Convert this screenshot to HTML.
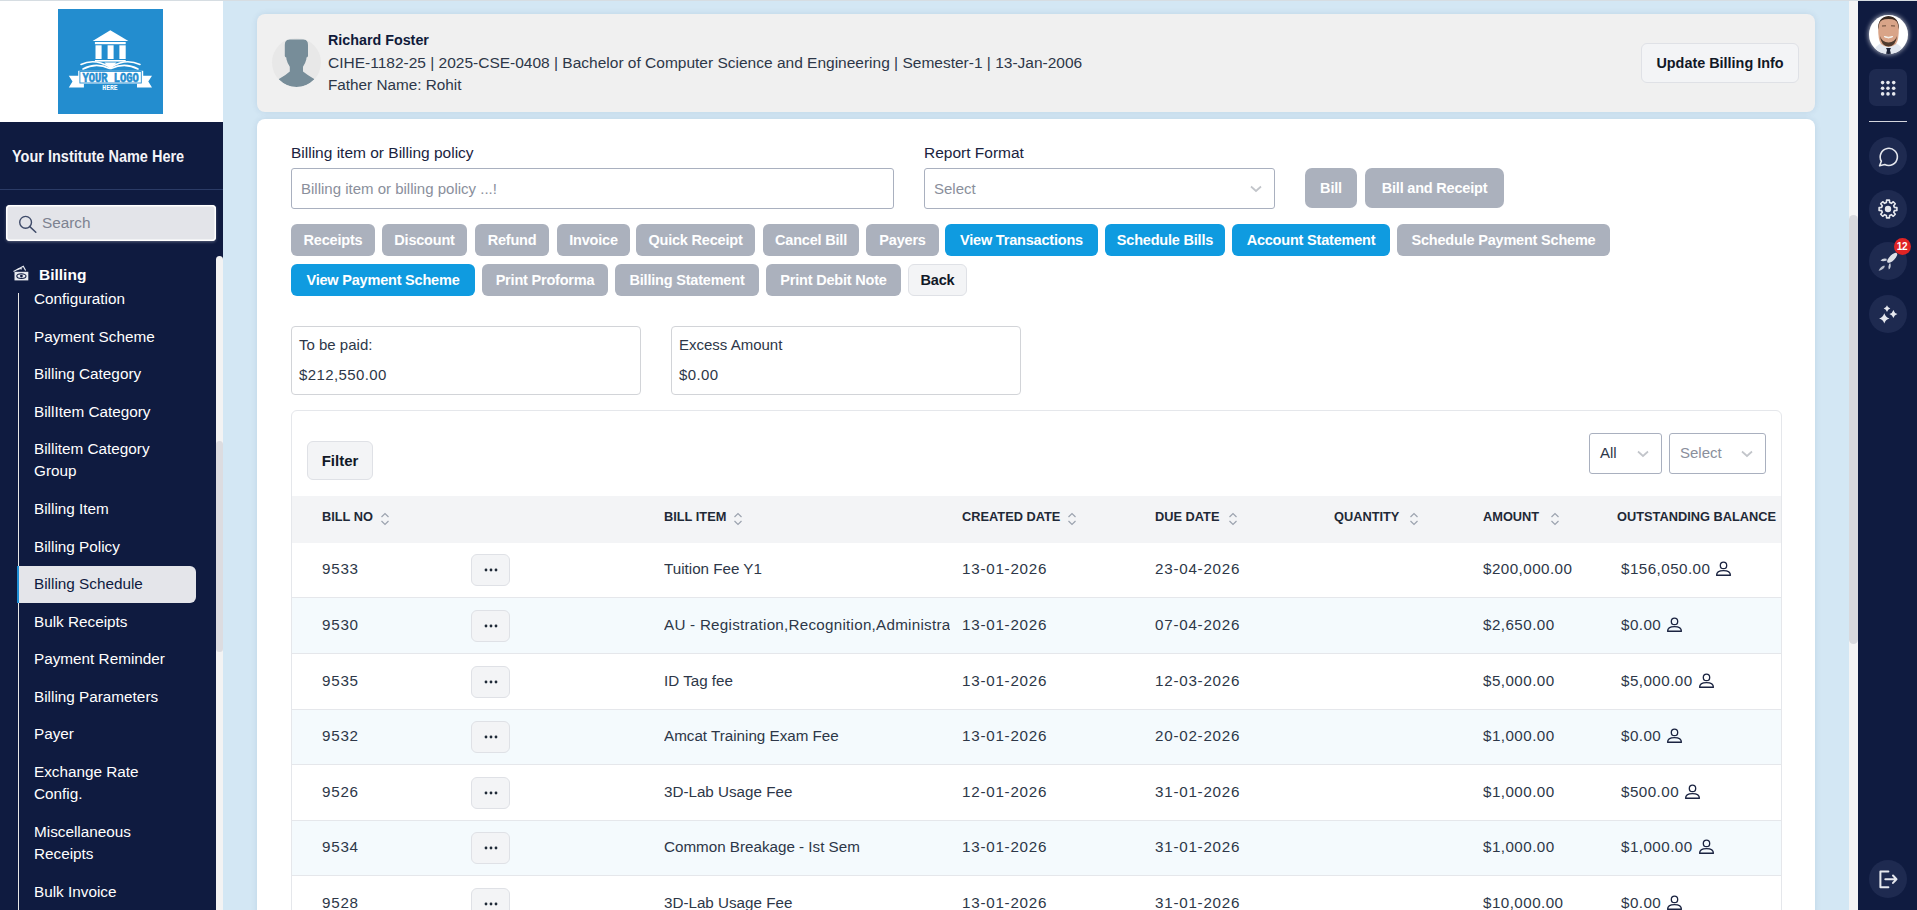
<!DOCTYPE html>
<html><head><meta charset="utf-8">
<style>
*{box-sizing:border-box;margin:0;padding:0}
html,body{width:1917px;height:910px;overflow:hidden;font-family:"Liberation Sans",sans-serif;background:#d3e7f4;color:#1f2937}
.abs{position:absolute}
#side{position:absolute;left:0;top:0;width:223px;height:910px;background:#0f1b40}
#side .top{position:absolute;left:0;top:0;width:223px;height:122px;background:#fff}
#logo{position:absolute;left:58px;top:9px;width:105px;height:105px;background:#238dcf}
#inst{position:absolute;left:12px;top:147.5px;color:#f4f4f8;font-weight:bold;font-size:15.6px;white-space:nowrap;transform-origin:0 0;transform:scaleX(0.93)}
#sdiv{position:absolute;left:0;top:189px;width:223px;height:1px;background:#2b3b66}
#search{position:absolute;left:6px;top:205px;width:210px;height:36px;background:#e3e4e9;border-radius:4px;box-shadow:0 0 0 1.5px #fff inset, 0 1px 3px rgba(255,255,255,.3)}
#search span{position:absolute;left:36px;top:9px;font-size:15.3px;color:#7d8290}
.menu{position:absolute;left:34px;color:#fff;font-size:15.3px;white-space:nowrap;line-height:22.2px}
#vline{position:absolute;left:18px;top:293px;width:1px;height:617px;background:#e6e6e6}
#active{position:absolute;left:17px;top:566px;width:179px;height:37px;background:#e4e5ea;border-radius:0 6px 6px 0;border-left:2px solid #1f8fd6}
#strack{position:absolute;left:216px;top:256px;width:7px;height:654px;background:#f3f3f3;border-radius:3.5px 3.5px 0 0}
#sthumb{position:absolute;left:216px;top:441px;width:7px;height:211px;background:#dcdce0;border-radius:3.5px}

#rail{position:absolute;left:1858px;top:0;width:59px;height:910px;background:#0f1b40}
#mtrack{position:absolute;left:1849px;top:0;width:9px;height:910px;background:#f4f4f4}
#mthumb{position:absolute;left:1849px;top:215px;width:9px;height:429px;background:#d8d9dd;border-radius:4.5px}

#hdr{position:absolute;left:257px;top:14px;width:1558px;height:98px;background:#f0f0f0;border-radius:8px;box-shadow:0 0 6px rgba(0,60,110,.10)}
#card{position:absolute;left:257px;top:119px;width:1558px;height:820px;background:#fff;border-radius:8px;box-shadow:0 0 6px rgba(0,60,110,.10)}
.t{position:absolute;white-space:nowrap}
.btn{position:absolute;height:32px;border-radius:6px;color:#fff;font-weight:bold;font-size:14.5px;line-height:32px;text-align:center;white-space:nowrap;letter-spacing:-0.2px}
.g{background:#abb1bd}
.b{background:#0f9be0}
.td{top:16.5px;font-size:15.2px;color:#2d3748;line-height:20px}
.num{letter-spacing:.45px}
.dt{letter-spacing:.75px}
.dots{position:absolute;left:179px;top:11.5px;width:39px;height:32px;border:1px solid #dfe1e6;background:#f3f4f6;border-radius:6px;display:flex;align-items:center;justify-content:center}
.ric{position:absolute;left:11px;width:38px;height:38px;border-radius:50%;background:#1e2a50}
.lbl{font-size:15.5px;color:#1a2340}
</style></head>
<body>
<div id="topline" style="position:absolute;left:0;top:0;width:1917px;height:1px;background:#d6dde2;z-index:5"></div>
<div id="side">
  <div class="top"></div>
  <div id="logo"><svg width="105" height="105" viewBox="0 0 105 105" style="position:absolute;left:0;top:0">
<g fill="#fff">
<path d="M34.6 31.9 L52.3 21.2 L70.4 31.9 Z"/>
<rect x="36.9" y="33" width="30.8" height="2.2"/>
<rect x="37.5" y="36.3" width="6.1" height="13.7"/>
<rect x="49.6" y="36.3" width="6" height="13.7"/>
<rect x="61.4" y="36.3" width="6.3" height="13.7"/>
<rect x="36.9" y="51" width="30.8" height="1.6"/>
<path d="M46.5 53.6 L58.5 53.6 L52.3 60.5 Z"/>
<rect x="20.2" y="61.8" width="65" height="13"/>
<path d="M10.8 66.8 L25.9 66.8 L25.9 78.5 L10.8 78.5 L14.5 72.6 Z"/>
<path d="M94 66.8 L79 66.8 L79 78.5 L94 78.5 L90.3 72.6 Z"/>
</g>
<g fill="none" stroke="#fff" stroke-width="1.6" stroke-linecap="round">
<path d="M23 55.5 Q36 49 51 57.5"/>
<path d="M82 55.5 Q68 49 54 57.5"/>
<path d="M25 60 Q38 53 51.5 59.5"/>
<path d="M80 60 Q67 53 53 59.5"/>
</g>
<rect x="21.9" y="62.4" width="61.4" height="11.6" fill="#fff" stroke="#248dd0" stroke-width="0.9"/>
<text x="52.6" y="72.6" text-anchor="middle" font-family="Liberation Mono" font-weight="bold" font-size="10.4" fill="#248dd0" stroke="#248dd0" stroke-width="0.5" transform="translate(52.6 72.6) scale(1 1.15) translate(-52.6 -72.6)">YOUR LOGO</text>
<text x="52" y="80.9" text-anchor="middle" font-family="Liberation Mono" font-weight="bold" font-size="6.4" fill="#fff" transform="translate(52 80.9) scale(1 1.0) translate(-52 -80.9)">HERE</text>
</svg></div>
  <div id="inst">Your Institute Name Here</div>
  <div id="sdiv"></div>
  <div id="search"><svg class="abs" style="left:12px;top:10px" width="20" height="20" viewBox="0 0 20 20"><circle cx="7.6" cy="7.3" r="5.9" fill="none" stroke="#3f4b69" stroke-width="1.4"/><path d="M11.8 11.6 L17.8 17.2" stroke="#3f4b69" stroke-width="1.5" stroke-linecap="round"/></svg><span>Search</span></div>
  <svg class="abs" style="left:12px;top:265px" width="18" height="18" viewBox="0 0 18 18"><g fill="none" stroke="#e8eaf0" stroke-width="1.2"><path d="M1.5 6.5 L11.3 1.3 L13.6 5.5"/><rect x="2.5" y="6.8" width="13.8" height="8.6" fill="#e8eaf0" stroke="none"/></g><ellipse cx="9.4" cy="11.1" rx="4.6" ry="2.4" fill="none" stroke="#0f1b40" stroke-width="1.1"/><circle cx="9.4" cy="11.1" r="1.4" fill="#0f1b40"/><path d="M5 4.8 Q8 3 10 4" stroke="#e8eaf0" stroke-width="1.1" fill="none"/></svg>
  <div class="t" style="left:39px;top:266px;color:#fff;font-weight:bold;font-size:15.5px">Billing</div>
  <div id="vline"></div>
  <div id="active"></div>
  <div class="menu" style="top:288px">Configuration</div>
  <div class="menu" style="top:326px">Payment Scheme</div>
  <div class="menu" style="top:363px">Billing Category</div>
  <div class="menu" style="top:401px">BillItem Category</div>
  <div class="menu" style="top:438px">Billitem Category<br>Group</div>
  <div class="menu" style="top:498px">Billing Item</div>
  <div class="menu" style="top:536px">Billing Policy</div>
  <div class="menu" style="top:573px;color:#0f1b40">Billing Schedule</div>
  <div class="menu" style="top:611px">Bulk Receipts</div>
  <div class="menu" style="top:648px">Payment Reminder</div>
  <div class="menu" style="top:686px">Billing Parameters</div>
  <div class="menu" style="top:723px">Payer</div>
  <div class="menu" style="top:761px">Exchange Rate<br>Config.</div>
  <div class="menu" style="top:821px">Miscellaneous<br>Receipts</div>
  <div class="menu" style="top:881px">Bulk Invoice</div>
  <div id="strack"></div>
  <div id="sthumb"></div>
</div>

<div id="hdr">
  <div class="abs" style="left:15px;top:24px;width:49px;height:49px;border-radius:50%;background:#e8e8e8;overflow:hidden">
    <svg width="49" height="49" viewBox="0 0 49 49"><path d="M17.5 1.5 Q12.8 1.5 12.8 7 L12.8 18 Q13 19 14.3 19.5 L14.5 21.5 Q15.5 25.5 17.8 28.7 L17.8 33.5 Q13.5 37.5 6.5 41.3 Q14 49 24.5 49 Q35 49 42.6 41.3 Q36 37.5 31 33.5 L31 28.7 Q33.3 25.5 34.3 21.5 L34.5 19.5 Q35.8 19 36 18 L36 7 Q36 1.5 31.5 1.5 Z" fill="#778d99"/></svg>
  </div>
  <div class="t" style="left:71px;top:18px;font-weight:bold;font-size:14.3px;color:#0f1a3a">Richard Foster</div>
  <div class="t" style="left:71px;top:40px;font-size:15.5px;color:#2d3748">CIHE-1182-25 | 2025-CSE-0408 | Bachelor of Computer Science and Engineering | Semester-1 | 13-Jan-2006</div>
  <div class="t" style="left:71px;top:62px;font-size:15.3px;color:#2d3748">Father Name: Rohit</div>
  <div class="abs" style="left:1384px;top:29px;width:158px;height:40px;border:1px solid #dfe1e6;background:#f3f4f6;border-radius:6px;font-weight:bold;font-size:14.4px;color:#111827;text-align:center;line-height:38px">Update Billing Info</div>
</div>
<div id="card">
</div>
<div id="content">
<div class="t lbl" style="left:291px;top:144px">Billing item or Billing policy</div>
<div class="abs" style="left:291px;top:168px;width:603px;height:41px;border:1px solid #a9b0bf;border-radius:3px"><span class="t" style="left:9px;top:11px;font-size:15px;color:#8a8f9c">Billing item or billing policy ...!</span></div>
<div class="t lbl" style="left:924px;top:144px">Report Format</div>
<div class="abs" style="left:924px;top:168px;width:351px;height:41px;border:1px solid #a9b0bf;border-radius:3px"><span class="t" style="left:9px;top:11px;font-size:15px;color:#8a8f9c">Select</span><svg class="abs" style="right:12px;top:16px" width="12" height="8" viewBox="0 0 12 8"><path d="M1 1.5 L6 6 L11 1.5" fill="none" stroke="#c2c5ca" stroke-width="1.7"/></svg></div>
<div class="btn g" style="left:1305px;top:168px;width:52px;height:40px;line-height:40px;border-radius:7px">Bill</div>
<div class="btn g" style="left:1365px;top:168px;width:139px;height:40px;line-height:40px;border-radius:7px">Bill and Receipt</div>
<div class="btn g" style="left:291px;top:224px;width:84px">Receipts</div>
<div class="btn g" style="left:382px;top:224px;width:85px">Discount</div>
<div class="btn g" style="left:475px;top:224px;width:74px">Refund</div>
<div class="btn g" style="left:557px;top:224px;width:73px">Invoice</div>
<div class="btn g" style="left:636px;top:224px;width:119px">Quick Receipt</div>
<div class="btn g" style="left:763px;top:224px;width:96px">Cancel Bill</div>
<div class="btn g" style="left:866px;top:224px;width:73px">Payers</div>
<div class="btn b" style="left:945px;top:224px;width:153px">View Transactions</div>
<div class="btn b" style="left:1105px;top:224px;width:120px">Schedule Bills</div>
<div class="btn b" style="left:1232px;top:224px;width:158px">Account Statement</div>
<div class="btn g" style="left:1397px;top:224px;width:213px">Schedule Payment Scheme</div>
<div class="btn b" style="left:291px;top:264px;width:184px">View Payment Scheme</div>
<div class="btn g" style="left:482px;top:264px;width:126px">Print Proforma</div>
<div class="btn g" style="left:615px;top:264px;width:144px">Billing Statement</div>
<div class="btn g" style="left:766px;top:264px;width:135px">Print Debit Note</div>
<div class="btn" style="left:908px;top:264px;width:59px;background:#f3f4f6;border:1px solid #dfe1e6;color:#111827;line-height:30px">Back</div>
<div class="abs" style="left:291px;top:326px;width:350px;height:69px;border:1px solid #d2d4d8;border-radius:4px"><span class="t" style="left:7px;top:9px;font-size:15px;color:#2d3748">To be paid:</span><span class="t" style="left:7px;top:39px;font-size:15px;color:#2d3748;letter-spacing:.4px">$212,550.00</span></div>
<div class="abs" style="left:671px;top:326px;width:350px;height:69px;border:1px solid #d2d4d8;border-radius:4px"><span class="t" style="left:7px;top:9px;font-size:15px;color:#2d3748">Excess Amount</span><span class="t" style="left:7px;top:39px;font-size:15px;color:#2d3748;letter-spacing:.4px">$0.00</span></div>
<div class="abs" style="left:291px;top:410px;width:1491px;height:520px;border:1px solid #e5e7eb;border-radius:6px"></div>
<div class="abs" style="left:307px;top:441px;width:66px;height:39px;border:1px solid #dfe1e6;background:#f3f4f6;border-radius:6px;font-weight:bold;font-size:15px;color:#111827;text-align:center;line-height:37px">Filter</div>
<div class="abs" style="left:1589px;top:433px;width:73px;height:41px;border:1px solid #a9b0bf;border-radius:3px"><span class="t" style="left:10px;top:10px;font-size:15px;color:#2d3748">All</span><svg class="abs" style="right:12px;top:16px" width="12" height="8" viewBox="0 0 12 8"><path d="M1 1.5 L6 6 L11 1.5" fill="none" stroke="#c2c5ca" stroke-width="1.7"/></svg></div>
<div class="abs" style="left:1669px;top:433px;width:97px;height:41px;border:1px solid #a9b0bf;border-radius:3px"><span class="t" style="left:10px;top:10px;font-size:15px;color:#8a8f9c">Select</span><svg class="abs" style="right:12px;top:16px" width="12" height="8" viewBox="0 0 12 8"><path d="M1 1.5 L6 6 L11 1.5" fill="none" stroke="#c2c5ca" stroke-width="1.7"/></svg></div>
<div class="abs" style="left:292px;top:496px;width:1489px;height:47px;background:#f3f4f6">
<span class="t" style="left:30px;top:13px;font-size:12.8px;font-weight:bold;color:#1f2937">BILL NO</span>
<svg class="abs" style="left:88px;top:15px" width="10" height="16" viewBox="0 0 10 16"><path d="M1.5 6 L5 2.5 L8.5 6 M1.5 10 L5 13.5 L8.5 10" fill="none" stroke="#9ca3af" stroke-width="1.2"/></svg>
<span class="t" style="left:372px;top:13px;font-size:12.8px;font-weight:bold;color:#1f2937">BILL ITEM</span>
<svg class="abs" style="left:441px;top:15px" width="10" height="16" viewBox="0 0 10 16"><path d="M1.5 6 L5 2.5 L8.5 6 M1.5 10 L5 13.5 L8.5 10" fill="none" stroke="#9ca3af" stroke-width="1.2"/></svg>
<span class="t" style="left:670px;top:13px;font-size:12.8px;font-weight:bold;color:#1f2937">CREATED DATE</span>
<svg class="abs" style="left:775px;top:15px" width="10" height="16" viewBox="0 0 10 16"><path d="M1.5 6 L5 2.5 L8.5 6 M1.5 10 L5 13.5 L8.5 10" fill="none" stroke="#9ca3af" stroke-width="1.2"/></svg>
<span class="t" style="left:863px;top:13px;font-size:12.8px;font-weight:bold;color:#1f2937">DUE DATE</span>
<svg class="abs" style="left:936px;top:15px" width="10" height="16" viewBox="0 0 10 16"><path d="M1.5 6 L5 2.5 L8.5 6 M1.5 10 L5 13.5 L8.5 10" fill="none" stroke="#9ca3af" stroke-width="1.2"/></svg>
<span class="t" style="left:1042px;top:13px;font-size:12.8px;font-weight:bold;color:#1f2937">QUANTITY</span>
<svg class="abs" style="left:1117px;top:15px" width="10" height="16" viewBox="0 0 10 16"><path d="M1.5 6 L5 2.5 L8.5 6 M1.5 10 L5 13.5 L8.5 10" fill="none" stroke="#9ca3af" stroke-width="1.2"/></svg>
<span class="t" style="left:1191px;top:13px;font-size:12.8px;font-weight:bold;color:#1f2937">AMOUNT</span>
<svg class="abs" style="left:1258px;top:15px" width="10" height="16" viewBox="0 0 10 16"><path d="M1.5 6 L5 2.5 L8.5 6 M1.5 10 L5 13.5 L8.5 10" fill="none" stroke="#9ca3af" stroke-width="1.2"/></svg>
<span class="t" style="left:1325px;top:13px;font-size:12.8px;font-weight:bold;color:#1f2937">OUTSTANDING BALANCE</span>
</div>
<div class="abs row" style="left:292px;top:542.8px;width:1489px;height:55.6px;background:#fff;border-bottom:1px solid #e5e7eb">
<span class="t td dt" style="left:30px">9533</span>
<div class="dots"><svg width="14" height="4" viewBox="0 0 14 4"><circle cx="2" cy="2" r="1.4" fill="#1f2937"/><circle cx="7" cy="2" r="1.4" fill="#1f2937"/><circle cx="12" cy="2" r="1.4" fill="#1f2937"/></svg></div>
<span class="t td" style="left:372px;width:286px;overflow:hidden;text-overflow:clip">Tuition Fee Y1</span>
<span class="t td dt" style="left:670px">13-01-2026</span>
<span class="t td dt" style="left:863px">23-04-2026</span>
<span class="t td num" style="left:1191px">$200,000.00</span>
<span class="t td num" style="left:1329px">$156,050.00<svg width="17" height="16" viewBox="0 0 17 16" style="vertical-align:-3px;margin-left:5px"><circle cx="8.5" cy="4.4" r="3.2" fill="none" stroke="#1a2340" stroke-width="1.3"/><path d="M1.6 14.2 Q1.6 9.6 8.5 9.6 Q15.4 9.6 15.4 14.2 Z" fill="none" stroke="#1a2340" stroke-width="1.35" stroke-linejoin="round"/></svg></span>
</div>
<div class="abs row" style="left:292px;top:598.4px;width:1489px;height:55.6px;background:#f4fafd;border-bottom:1px solid #e5e7eb">
<span class="t td dt" style="left:30px">9530</span>
<div class="dots"><svg width="14" height="4" viewBox="0 0 14 4"><circle cx="2" cy="2" r="1.4" fill="#1f2937"/><circle cx="7" cy="2" r="1.4" fill="#1f2937"/><circle cx="12" cy="2" r="1.4" fill="#1f2937"/></svg></div>
<span class="t td" style="left:372px;width:286px;overflow:hidden;text-overflow:clip;letter-spacing:.26px">AU - Registration,Recognition,Administration</span>
<span class="t td dt" style="left:670px">13-01-2026</span>
<span class="t td dt" style="left:863px">07-04-2026</span>
<span class="t td num" style="left:1191px">$2,650.00</span>
<span class="t td num" style="left:1329px">$0.00<svg width="17" height="16" viewBox="0 0 17 16" style="vertical-align:-3px;margin-left:5px"><circle cx="8.5" cy="4.4" r="3.2" fill="none" stroke="#1a2340" stroke-width="1.3"/><path d="M1.6 14.2 Q1.6 9.6 8.5 9.6 Q15.4 9.6 15.4 14.2 Z" fill="none" stroke="#1a2340" stroke-width="1.35" stroke-linejoin="round"/></svg></span>
</div>
<div class="abs row" style="left:292px;top:654.0px;width:1489px;height:55.6px;background:#fff;border-bottom:1px solid #e5e7eb">
<span class="t td dt" style="left:30px">9535</span>
<div class="dots"><svg width="14" height="4" viewBox="0 0 14 4"><circle cx="2" cy="2" r="1.4" fill="#1f2937"/><circle cx="7" cy="2" r="1.4" fill="#1f2937"/><circle cx="12" cy="2" r="1.4" fill="#1f2937"/></svg></div>
<span class="t td" style="left:372px;width:286px;overflow:hidden;text-overflow:clip">ID Tag fee</span>
<span class="t td dt" style="left:670px">13-01-2026</span>
<span class="t td dt" style="left:863px">12-03-2026</span>
<span class="t td num" style="left:1191px">$5,000.00</span>
<span class="t td num" style="left:1329px">$5,000.00<svg width="17" height="16" viewBox="0 0 17 16" style="vertical-align:-3px;margin-left:5px"><circle cx="8.5" cy="4.4" r="3.2" fill="none" stroke="#1a2340" stroke-width="1.3"/><path d="M1.6 14.2 Q1.6 9.6 8.5 9.6 Q15.4 9.6 15.4 14.2 Z" fill="none" stroke="#1a2340" stroke-width="1.35" stroke-linejoin="round"/></svg></span>
</div>
<div class="abs row" style="left:292px;top:709.6px;width:1489px;height:55.6px;background:#f4fafd;border-bottom:1px solid #e5e7eb">
<span class="t td dt" style="left:30px">9532</span>
<div class="dots"><svg width="14" height="4" viewBox="0 0 14 4"><circle cx="2" cy="2" r="1.4" fill="#1f2937"/><circle cx="7" cy="2" r="1.4" fill="#1f2937"/><circle cx="12" cy="2" r="1.4" fill="#1f2937"/></svg></div>
<span class="t td" style="left:372px;width:286px;overflow:hidden;text-overflow:clip">Amcat Training Exam Fee</span>
<span class="t td dt" style="left:670px">13-01-2026</span>
<span class="t td dt" style="left:863px">20-02-2026</span>
<span class="t td num" style="left:1191px">$1,000.00</span>
<span class="t td num" style="left:1329px">$0.00<svg width="17" height="16" viewBox="0 0 17 16" style="vertical-align:-3px;margin-left:5px"><circle cx="8.5" cy="4.4" r="3.2" fill="none" stroke="#1a2340" stroke-width="1.3"/><path d="M1.6 14.2 Q1.6 9.6 8.5 9.6 Q15.4 9.6 15.4 14.2 Z" fill="none" stroke="#1a2340" stroke-width="1.35" stroke-linejoin="round"/></svg></span>
</div>
<div class="abs row" style="left:292px;top:765.2px;width:1489px;height:55.6px;background:#fff;border-bottom:1px solid #e5e7eb">
<span class="t td dt" style="left:30px">9526</span>
<div class="dots"><svg width="14" height="4" viewBox="0 0 14 4"><circle cx="2" cy="2" r="1.4" fill="#1f2937"/><circle cx="7" cy="2" r="1.4" fill="#1f2937"/><circle cx="12" cy="2" r="1.4" fill="#1f2937"/></svg></div>
<span class="t td" style="left:372px;width:286px;overflow:hidden;text-overflow:clip">3D-Lab Usage Fee</span>
<span class="t td dt" style="left:670px">12-01-2026</span>
<span class="t td dt" style="left:863px">31-01-2026</span>
<span class="t td num" style="left:1191px">$1,000.00</span>
<span class="t td num" style="left:1329px">$500.00<svg width="17" height="16" viewBox="0 0 17 16" style="vertical-align:-3px;margin-left:5px"><circle cx="8.5" cy="4.4" r="3.2" fill="none" stroke="#1a2340" stroke-width="1.3"/><path d="M1.6 14.2 Q1.6 9.6 8.5 9.6 Q15.4 9.6 15.4 14.2 Z" fill="none" stroke="#1a2340" stroke-width="1.35" stroke-linejoin="round"/></svg></span>
</div>
<div class="abs row" style="left:292px;top:820.8px;width:1489px;height:55.6px;background:#f4fafd;border-bottom:1px solid #e5e7eb">
<span class="t td dt" style="left:30px">9534</span>
<div class="dots"><svg width="14" height="4" viewBox="0 0 14 4"><circle cx="2" cy="2" r="1.4" fill="#1f2937"/><circle cx="7" cy="2" r="1.4" fill="#1f2937"/><circle cx="12" cy="2" r="1.4" fill="#1f2937"/></svg></div>
<span class="t td" style="left:372px;width:286px;overflow:hidden;text-overflow:clip">Common Breakage - Ist Sem</span>
<span class="t td dt" style="left:670px">13-01-2026</span>
<span class="t td dt" style="left:863px">31-01-2026</span>
<span class="t td num" style="left:1191px">$1,000.00</span>
<span class="t td num" style="left:1329px">$1,000.00<svg width="17" height="16" viewBox="0 0 17 16" style="vertical-align:-3px;margin-left:5px"><circle cx="8.5" cy="4.4" r="3.2" fill="none" stroke="#1a2340" stroke-width="1.3"/><path d="M1.6 14.2 Q1.6 9.6 8.5 9.6 Q15.4 9.6 15.4 14.2 Z" fill="none" stroke="#1a2340" stroke-width="1.35" stroke-linejoin="round"/></svg></span>
</div>
<div class="abs row" style="left:292px;top:876.4px;width:1489px;height:55.6px;background:#fff;border-bottom:1px solid #e5e7eb">
<span class="t td dt" style="left:30px">9528</span>
<div class="dots"><svg width="14" height="4" viewBox="0 0 14 4"><circle cx="2" cy="2" r="1.4" fill="#1f2937"/><circle cx="7" cy="2" r="1.4" fill="#1f2937"/><circle cx="12" cy="2" r="1.4" fill="#1f2937"/></svg></div>
<span class="t td" style="left:372px;width:286px;overflow:hidden;text-overflow:clip">3D-Lab Usage Fee</span>
<span class="t td dt" style="left:670px">13-01-2026</span>
<span class="t td dt" style="left:863px">31-01-2026</span>
<span class="t td num" style="left:1191px">$10,000.00</span>
<span class="t td num" style="left:1329px">$0.00<svg width="17" height="16" viewBox="0 0 17 16" style="vertical-align:-3px;margin-left:5px"><circle cx="8.5" cy="4.4" r="3.2" fill="none" stroke="#1a2340" stroke-width="1.3"/><path d="M1.6 14.2 Q1.6 9.6 8.5 9.6 Q15.4 9.6 15.4 14.2 Z" fill="none" stroke="#1a2340" stroke-width="1.35" stroke-linejoin="round"/></svg></span>
</div>
</div>

<div id="mtrack"></div>
<div id="mthumb"></div>
<div id="rail">
  <div class="abs" style="left:11px;top:15.3px;width:38.5px;height:38.5px;border-radius:50%;background:#fff;box-shadow:0 0 4px 1px rgba(255,255,255,.55);overflow:hidden">
    <svg width="39" height="39" viewBox="0 0 39 39">
      <path d="M4 39 Q6 30 13 28 L19.5 31 L26 28 Q33 30 35 39 Z" fill="#e3e8f0"/>
      <path d="M17 33 L22 33 L21 35 L22 39 L17 39 L18 35 Z" fill="#1b2236"/>
      <path d="M9.2 12 Q9 25 12 29 Q15.5 32 19.5 32 Q23.5 32 27 29 Q30 25 29.8 12 Q29 1.5 19.5 1.5 Q10 1.5 9.2 12 Z" fill="#d9a488"/>
      <path d="M9 15 Q8.5 2 19.5 1 Q30.5 2 30 15 L28.8 9 Q28 4 19.5 4 Q11 4 10.2 9 Z" fill="#3b2a20"/>
      <path d="M11 21 Q12 31 19.5 31.5 Q27 31 28 21 Q26 27 19.5 27.5 Q13 27 11 21 Z" fill="#4e3a2e"/>
      <path d="M15 21.5 Q19.5 24.5 24 21.5 Q19.5 23 15 21.5 Z" fill="#f4f0ec" stroke="#f4f0ec" stroke-width="1"/>
      <path d="M13 11 L17 10.8 M22 10.8 L26 11" stroke="#5a4030" stroke-width="0.9"/>
    </svg>
  </div>
  <div class="abs" style="left:11px;top:69px;width:38px;height:37px;border-radius:7px;background:#1e2a50">
    <svg width="38" height="37" viewBox="0 0 38 37"><g fill="#e6e8ee">
      <circle cx="13.6" cy="13.6" r="1.8"/><circle cx="19" cy="13.6" r="1.8"/><circle cx="24.7" cy="13.6" r="1.8"/>
      <circle cx="13.6" cy="19.3" r="1.8"/><circle cx="19" cy="19.3" r="1.8"/><circle cx="24.7" cy="19.3" r="1.8"/>
      <circle cx="13.6" cy="24.9" r="1.8"/><circle cx="19" cy="24.9" r="1.8"/><circle cx="24.7" cy="24.9" r="1.8"/>
    </g></svg>
  </div>
  <div class="abs" style="left:11px;top:120.5px;width:38px;height:1.6px;background:#d4d6de"></div>
  <div class="ric" style="top:137px"><svg width="38" height="38" viewBox="0 0 38 38"><path d="M12.35 24.20 A8.6 8.6 0 1 1 15.76 27.49 L10.6 28.8 Z" fill="none" stroke="#e6e8ee" stroke-width="1.6" stroke-linejoin="round"/></svg></div>
  <div class="ric" style="top:189.5px"><svg width="38" height="38" viewBox="0 0 38 38"><path d="M27.89 17.59 L27.89 20.41 L25.39 20.64 L24.68 22.36 L26.28 24.29 L24.29 26.28 L22.36 24.68 L20.64 25.39 L20.41 27.89 L17.59 27.89 L17.36 25.39 L15.64 24.68 L13.71 26.28 L11.72 24.29 L13.32 22.36 L12.61 20.64 L10.11 20.41 L10.11 17.59 L12.61 17.36 L13.32 15.64 L11.72 13.71 L13.71 11.72 L15.64 13.32 L17.36 12.61 L17.59 10.11 L20.41 10.11 L20.64 12.61 L22.36 13.32 L24.29 11.72 L26.28 13.71 L24.68 15.64 L25.39 17.36 Z" fill="none" stroke="#e6e8ee" stroke-width="1.6" stroke-linejoin="round"/><circle cx="19" cy="19" r="3.2" fill="#e6e8ee"/></svg></div>
  <div class="ric" style="top:242px"><svg width="38" height="38" viewBox="0 0 38 38">
    <ellipse cx="23.2" cy="15.8" rx="6.6" ry="2.7" transform="rotate(-45 23.2 15.8)" fill="#dde0e8"/>
    <path d="M11.5 18.8 Q13.5 15.8 17.5 16.8 L17.8 18.4 Q14.5 19.8 11.5 18.8 Z" fill="#c9ced9"/>
    <path d="M20.2 21.8 L21.4 21.2 Q22.5 25.5 19.8 27.6 Q19 24.5 20.2 21.8 Z" fill="#c9ced9"/>
    <path d="M15.5 23.5 Q12 23.8 9.6 28.8 Q14.2 27.8 15.7 24.8 Z" fill="#b9bfcc"/>
  </svg></div>
  <div class="abs" style="left:35.5px;top:238px;width:17px;height:17px;border-radius:50%;background:#e02424;color:#fff;font-weight:bold;font-size:10px;line-height:17px;text-align:center;letter-spacing:-0.3px">12</div>
  <div class="ric" style="top:294.5px"><svg width="38" height="38" viewBox="0 0 38 38"><g fill="#e6e8ee"><path d="M15.3 18.2 Q16.444000000000003 22.256 20.5 23.4 Q16.444000000000003 24.543999999999997 15.3 28.599999999999998 Q14.156 24.543999999999997 10.100000000000001 23.4 Q14.156 22.256 15.3 18.2 Z"/><path d="M24.4 15.0 Q25.279999999999998 18.12 28.4 19 Q25.279999999999998 19.88 24.4 23.0 Q23.52 19.88 20.4 19 Q23.52 18.12 24.4 15.0 Z"/><path d="M18 10.3 Q18.726 12.873999999999999 21.3 13.6 Q18.726 14.326 18 16.9 Q17.274 14.326 14.7 13.6 Q17.274 12.873999999999999 18 10.3 Z"/></g></svg></div>
  <div class="ric" style="top:859.5px"><svg width="38" height="38" viewBox="0 0 38 38"><g fill="none" stroke="#e6e8ee" stroke-width="2" stroke-linecap="round" stroke-linejoin="round">
    <path d="M19.4 11.6 L11.4 11.6 L11.4 27.3 L19.4 27.3"/><path d="M16.3 19.2 L27.5 19.2 M24 15.5 L27.5 19.2 L24 22.9"/></g></svg></div>
</div>
</body></html>
